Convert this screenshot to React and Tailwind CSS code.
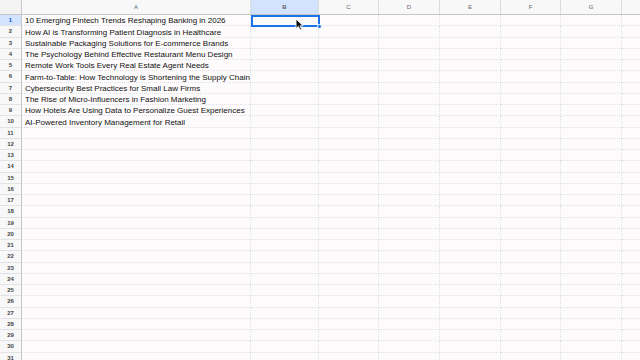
import React from "react";

const titles = [
  "10 Emerging Fintech Trends Reshaping Banking in 2026",
  "How AI is Transforming Patient Diagnosis in Healthcare",
  "Sustainable Packaging Solutions for E-commerce Brands",
  "The Psychology Behind Effective Restaurant Menu Design",
  "Remote Work Tools Every Real Estate Agent Needs",
  "Farm-to-Table: How Technology is Shortening the Supply Chain",
  "Cybersecurity Best Practices for Small Law Firms",
  "The Rise of Micro-Influencers in Fashion Marketing",
  "How Hotels Are Using Data to Personalize Guest Experiences",
  "AI-Powered Inventory Management for Retail",
];

const cols = [
  { name: "A", w: "w-[229px]" },
  { name: "B", w: "w-[68px]" },
  { name: "C", w: "w-[60px]" },
  { name: "D", w: "w-[61px]" },
  { name: "E", w: "w-[61px]" },
  { name: "F", w: "w-[60px]" },
  { name: "G", w: "w-[61px]" },
  { name: "", w: "w-[40px]" },
];

const rows = Array.from({ length: 32 }, (_, i) => i + 1);

const Cursor = () => (
  <svg width="9" height="13" viewBox="0 0 9 13" className="absolute left-[295px] top-[18px]">
    <path d="M1 1 L1 10.5 L3.4 8.4 L5 12 L6.6 11.3 L5.1 7.8 L8.2 7.8 Z" fill="#111" stroke="#fff" strokeWidth="0.9" strokeLinejoin="round" />
  </svg>
);

export default function App() {
  return (
    <div className="relative w-[640px] h-[360px] overflow-hidden bg-[#fdfbfb] text-[#1f1f1f]" style={{ fontFamily: '"Liberation Sans", Arial, sans-serif' }}>
      {/* column headers */}
      <div className="flex h-[15px] bg-[#f8f8f9] border-b border-[#c7c7c7]">
        <div className="w-[22px] shrink-0 border-r border-[#c7c7c7] bg-[#f3f3f4]" />
        {cols.map((c) => (
          <div
            key={c.name || "h"}
            className={`${c.w} shrink-0 flex items-center justify-center text-[6px] text-[#5f6368] border-r border-[#dadce0] ${c.name === "B" ? "bg-[#d3e3fd] text-[#0b57d0] font-bold" : ""}`}
          >
            {c.name}
          </div>
        ))}
      </div>

      {/* grid */}
      {rows.map((r) => (
        <div key={r} className="flex h-[11.25px]">
          <div
            className={`w-[22px] shrink-0 flex items-center justify-center pt-[1px] text-[6px] font-semibold border-r border-[#c7c7c7] border-b border-b-[#e3e3e6] ${r === 1 ? "bg-[#d3e3fd] text-[#0b57d0] font-bold" : "bg-[#f8f8f9] text-[#444746]"}`}
          >
            {r}
          </div>
          {cols.map((c, ci) => (
            <div
              key={ci}
              className={`${c.w} shrink-0 border-r border-b border-dotted border-[#dfe0ea] flex items-end overflow-hidden whitespace-nowrap`}
            >
              {ci === 0 && titles[r - 1] ? (
                <span className="pl-[3px] text-[8px] leading-none text-[#111]">{titles[r - 1]}</span>
              ) : null}
            </div>
          ))}
        </div>
      ))}

      {/* selected cell B1 */}
      <div className="absolute left-[251px] top-[15px] w-[69px] h-[12px] border-2 border-[#1a73e8]" />
      <div className="absolute left-[317px] top-[24px] w-[5px] h-[5px] rounded-full bg-[#1a73e8] border border-white" />
      <Cursor />
    </div>
  );
}
